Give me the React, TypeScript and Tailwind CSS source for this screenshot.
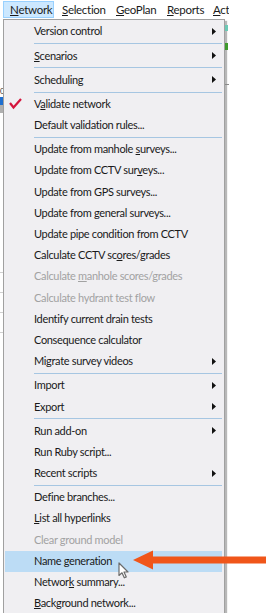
import React from "react";

type Item =
  | { sep: true }
  | {
      sep?: false;
      parts: [string, string, string];
      sub?: boolean;
      check?: boolean;
      disabled?: boolean;
      hl?: boolean;
    };

const S: Item = { sep: true };
const it = (a: string, u = "", b = "", o: Partial<{ sub: boolean; check: boolean; disabled: boolean; hl: boolean }> = {}): Item => ({
  parts: [a, u, b],
  ...o,
});

const items: Item[] = [
  it("Version control", "", "", { sub: true }),
  S,
  it("", "S", "cenarios", { sub: true }),
  S,
  it("Scheduling", "", "", { sub: true }),
  S,
  it("V", "a", "lidate network", { check: true }),
  it("Default validation rules..."),
  S,
  it("Update from manhole ", "s", "urveys..."),
  it("Update from CCTV sur", "v", "eys..."),
  it("Update from GPS surveys..."),
  it("Update from general surveys..."),
  it("Update pipe condition from CCTV"),
  it("Calculate CCTV sc", "o", "res/grades"),
  it("Calculate ", "m", "anhole scores/grades", { disabled: true }),
  it("Calculate hydrant test flow", "", "", { disabled: true }),
  it("Identify current drain tests"),
  it("Consequence calculator"),
  it("Migrate survey videos", "", "", { sub: true }),
  S,
  it("Import", "", "", { sub: true }),
  it("Export", "", "", { sub: true }),
  S,
  it("Run add-on", "", "", { sub: true }),
  it("Run Ruby script..."),
  it("Recent scripts", "", "", { sub: true }),
  S,
  it("Define branches..."),
  it("", "L", "ist all hyperlinks"),
  it("Clear ground model", "", "", { disabled: true }),
  it("Name generation", "", "", { hl: true }),
  it("Networ", "k", " summary..."),
  it("", "B", "ackground network..."),
];

function Tri() {
  return (
    <svg width="4" height="7" viewBox="0 0 4 7">
      <path d="M0 0 L4 3.5 L0 7 Z" fill="#111" />
    </svg>
  );
}

function Check() {
  return (
    <svg width="14" height="12" viewBox="0 0 14 12">
      <path d="M1 5 L4.5 9.5 L12 1" stroke="#d4143c" strokeWidth="2.2" fill="none" strokeLinejoin="miter" />
    </svg>
  );
}

function Cursor() {
  return (
    <svg width="12" height="17" viewBox="0 0 12 17" className="absolute left-[112.5px] top-[11px]">
      <path d="M1 1 L1 13.5 L4 10.8 L6.3 15.8 L8.3 14.9 L6 10 L10 10 Z" fill="#fff" stroke="#6b6b6b" strokeWidth="1.2" strokeLinejoin="round" />
    </svg>
  );
}

export default function App() {
  return (
    <div
      className="relative w-[266px] h-[613px] overflow-hidden bg-white text-[#1a1a1a]"
      style={{ fontFamily: 'Lato, "Open Sans", sans-serif' }}
    >
      {/* menu bar */}
      <div className="flex h-[19px] w-[229px] items-start overflow-hidden text-[11.5px] leading-none tracking-[-0.3px]">
        <div className="ml-[3px] mt-[1px] flex h-[17px] w-[51px] shrink-0 items-center border border-[#99d1ff] bg-[#cce8ff] pl-[6px]">
          <span className="underline underline-offset-[1px]">N</span>etwork
        </div>
        <div className="mt-[1px] flex h-[17px] items-center pl-[8px] whitespace-nowrap">
          <span className="w-[54px] shrink-0">
            <span className="underline underline-offset-[1px]">S</span>election
          </span>
          <span className="w-[51px] shrink-0">
            <span className="underline underline-offset-[1px]">G</span>eoPlan
          </span>
          <span className="w-[46px] shrink-0">
            <span className="underline underline-offset-[1px]">R</span>eports
          </span>
          <span className="shrink-0">
            <span className="underline underline-offset-[1px]">A</span>ct
          </span>
        </div>
      </div>

      <div className="flex">
        {/* left strip of app behind */}
        <div className="flex w-[3px] flex-col">
          <div className="h-[68px]" />
          <div className="h-[10px] text-[8px] leading-none text-[#333]">0</div>
          <div className="h-[8px] bg-[#1e6fd0]" />
          <div className="h-[8px] bg-[#b0b0b0]" />
          <div className="h-[160px] border-b border-[#d0d0d0]" />
          <div className="h-[20px] border-b border-[#d0d0d0]" />
          <div className="h-[20px] border-b border-[#d0d0d0]" />
          <div className="h-[20px] border-b border-[#d0d0d0]" />
        </div>

        {/* dropdown menu */}
        <div className="flex w-[222px] flex-col border border-[#a0a0a0] bg-[#f0eff2] pt-[1px] shadow-[2px_2px_1px_rgba(0,0,0,0.28)] text-[11px] tracking-[-0.33px]">
          {items.map((m, i) =>
            m.sep ? (
              <div key={i} className="flex h-[3px] items-center">
                <div className="ml-[30px] mr-[2px] h-px flex-1 bg-[#a6c6e2]" />
              </div>
            ) : (
              <div
                key={i}
                className={`relative mx-[1px] mr-[2px] flex h-[21.2px] items-center ${
                  m.hl ? "bg-[#bcdcf5]" : ""
                } ${m.disabled ? "text-[#a2a2a2]" : "text-[#1a1a1a]"}`}
              >
                <div className="flex w-[29px] items-center pl-[4px]">{m.check ? <Check /> : null}</div>
                <div className="flex-1 whitespace-nowrap">
                  {m.parts[0]}
                  {m.parts[1] ? <span className="underline underline-offset-[1px]">{m.parts[1]}</span> : null}
                  {m.parts[2]}
                </div>
                {m.sub ? (
                  <div className="pr-[6px]">
                    <Tri />
                  </div>
                ) : null}
                {m.hl ? <Cursor /> : null}
              </div>
            )
          )}
        </div>

        {/* right area */}
        <div className="flex w-[4px] flex-col">
          <div className="h-[6px]" />
          <div className="h-[6px] w-[3px] bg-[#6cc9b5]" />
          <div className="h-[12px]" />
          <div className="h-[7px] w-[3px] bg-[#3f9a2d]" />
          <div className="h-[34px]" />
          <div className="h-px w-[4px] bg-[#8a8a8a]" />
        </div>
      </div>

      {/* orange callout arrow */}
      <svg className="absolute left-[131px] top-[549px]" width="135" height="22" viewBox="0 0 135 22">
        <path d="M2 11 L22 1.5 L22 7.5 L135 7.5 L135 14.5 L22 14.5 L22 20.5 Z" fill="#f0561a" />
      </svg>
    </div>
  );
}
